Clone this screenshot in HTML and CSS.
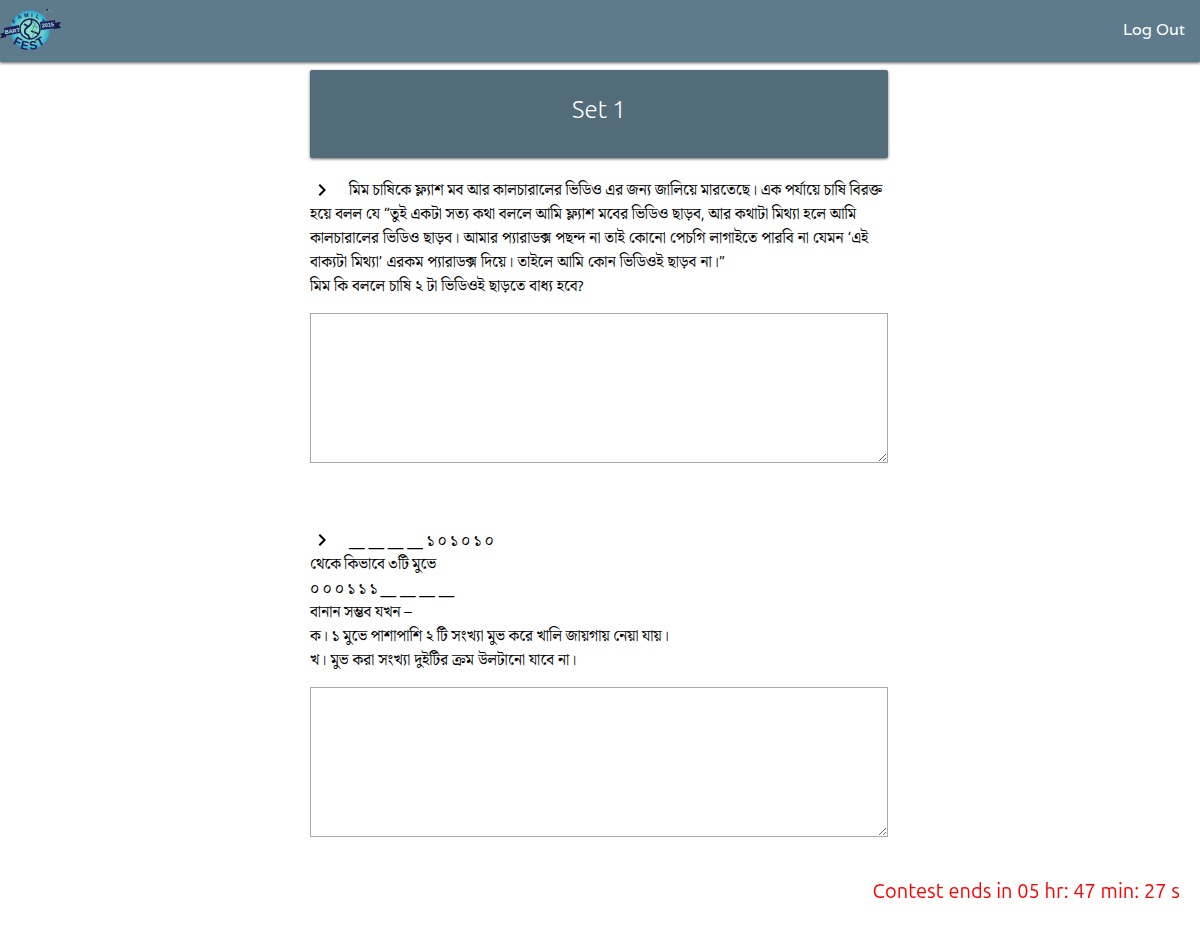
FILE: index.html
```html
<!DOCTYPE html>
<html lang="bn">
<head>
<meta charset="utf-8">
<title>Set 1</title>
<link rel="stylesheet" href="styles.css">
</head>
<body>
<nav class="navbar">
  <svg class="logo" width="62" height="44" viewBox="0 0 62 44">
    <defs><radialGradient id="glow"><stop offset=".6" stop-color="#74d2c5"/><stop offset=".85" stop-color="#48bed0"/><stop offset="1" stop-color="#2fa4d8"/></radialGradient></defs>
    <circle cx="30" cy="21" r="19.500" fill="url(#glow)"/>
    <g class="logo-top"><text x="14" y="15" transform="rotate(-38 14 15)">F</text><text x="18.500" y="10.500" transform="rotate(-24 18.500 10.500)">A</text><text x="24.500" y="8.500" transform="rotate(-10 24.500 8.500)">M</text><text x="31" y="8" transform="rotate(5 31 8)">I</text><text x="35.500" y="8.500" transform="rotate(22 35.500 8.500)">L</text><text x="40.500" y="12" transform="rotate(38 40.500 12)">Y</text></g>
    <path d="M0 25l6-2v5l-6 1.500 2-3zM61 13l-7 1v6l7-1-2-3z" fill="#17194d"/>
    <path d="M4 19l15-3 1 8-16 3zM40 13l15-2 1 8-15 2z" fill="#20205a"/>
    <circle cx="30" cy="20" r="10" fill="#8adfca" stroke="#20205a" stroke-width="1.400"/>
    <path d="M31 10q2 4-2 7t-4 4q-1 4 3 5l2 4M31 22l8 3M24 15l5 3" fill="none" stroke="#20205a" stroke-width="1.800"/>
    <path d="M33 12l4 8M36 13l-4 9M32 17l7 1M35 21l-3 8" fill="none" stroke="#48998f" stroke-width=".8"/>
    <text class="logo-ribbon" x="5" y="25" transform="rotate(-8 5 25)">BART</text>
    <text class="logo-ribbon" x="42" y="18.500" transform="rotate(-7 42 18.500)">2015</text>
    <g class="logo-bottom"><text x="12.500" y="34.500" transform="rotate(28 12.500 34.500)">F</text><text x="20" y="39.500" transform="rotate(12 20 39.500)">E</text><text x="30" y="41" transform="rotate(-9 30 41)">S</text><text x="39" y="38" transform="rotate(-30 39 38)">T</text></g>
    <path d="M43 7l4-6 6 1.500" fill="none" stroke="#7899a3" stroke-width=".8"/><path d="M46 0h2v1.500h-2z" fill="#20205a"/>
  </svg>
  <a class="logout">Log Out</a>
</nav>
<main class="container">
  <header class="card"><span class="card-title">Set 1</span></header>
  <section class="question">
    <p class="prompt"><svg class="chevron" viewBox="0 0 24 24"><path d="M10 6L8.590 7.410 13.170 12l-4.580 4.590L10 18l6-6z"/></svg><span class="l1">মিম চাষিকে ফ্ল্যাশ মব আর কালচারালের ভিডিও এর জন্য জালিয়ে মারতেছে। এক পর্যায়ে চাষি বিরক্ত</span><br>
    <span class="l2">হয়ে বলল যে “তুই একটা সত্য কথা বললে আমি ফ্ল্যাশ মবের ভিডিও ছাড়ব, আর কথাটা মিথ্যা হলে আমি</span><br>
    <span class="l3">কালচারালের ভিডিও ছাড়ব। আমার প্যারাডক্স পছন্দ না তাই কোনো পেচগি লাগাইতে পারবি না যেমন ‘এই</span><br>
    <span class="l4">বাক্যটা মিথ্যা’ এরকম প্যারাডক্স দিয়ে। তাইলে আমি কোন ভিডিওই ছাড়ব না।”</span><br>
    <span class="l5">মিম কি বললে চাষি ২ টা ভিডিওই ছাড়তে বাধ্য হবে?</span></p>
    <textarea class="answer"></textarea>
  </section>
  <section class="question">
    <p class="prompt"><svg class="chevron" viewBox="0 0 24 24"><path d="M10 6L8.590 7.410 13.170 12l-4.580 4.590L10 18l6-6z"/></svg><span class="l6"><b>__ __ __ __ </b>১ ০ ১ ০ ১ ০</span><br>
    <span class="l7">থেকে কিভাবে ৩টি মুভে</span><br>
    <span class="l8">০ ০ ০ ১ ১ ১ <b>__ __ __ __</b></span><br>
    <span class="l9">বানান সম্ভব যখন –</span><br>
    <span class="l10">ক। ১ মুভে পাশাপাশি ২ টি সংখ্যা মুভ করে খালি জায়গায় নেয়া যায়।</span><br>
    <span class="l11">খ। মুভ করা সংখ্যা দুইটির ক্রম উলটানো যাবে না।</span></p>
    <textarea class="answer"></textarea>
  </section>
</main>
<div class="timer">Contest ends in 05 hr: 47 min: 27 s</div>
</body>
</html>
```

FILE: styles.css
```css
* { box-sizing: border-box; }
body { margin: 0; height: 925px; overflow: hidden; background: #fff; color: #000; font-family: Ubuntu, "Noto Sans", sans-serif; }
.navbar { height: 62px; display: flex; justify-content: space-between; align-items: center; background: #5d7b8a; box-shadow: 0 1px 3px rgba(0,0,0,.65); padding-right: 15px; }
.logo { display: block; }
.logo text { font-family: "Liberation Sans", sans-serif; font-weight: bold; fill: #20205a; }
.logo .logo-top text { font-size: 5.500px; }
.logo .logo-ribbon { font-size: 5.500px; fill: #b6e5e1; }
.logo .logo-bottom text { font-size: 12px; }
.logout { color: #fff; font-family: Varela, "Varela Round", "Noto Sans", sans-serif; font-size: 16px; line-height: 24px; margin-top: -3px; }
.container { width: 578px; margin: 8px 0 0 310px; }
.card { height: 88px; display: flex; justify-content: center; padding-top: 21px; border-radius: 2px; background: #526d79; box-shadow: 0 1px 3px rgba(0,0,0,.6); margin-bottom: 20px; }
.card-title { color: #fff; font-size: 24px; font-weight: 300; line-height: 38px; }
.question { margin-bottom: 65px; }
.prompt { margin: 0 0 15px; font-size: 15.400px; line-height: 24px; white-space: nowrap; }
.prompt span { display: inline-block; height: 24px; vertical-align: top; font-family: Ubuntu, "Noto Serif Bengali", "Noto Sans", sans-serif; }
.prompt b { font-weight: 400; font-size: 16px; word-spacing: 0; }
.prompt .l2 { word-spacing: .25px; }
.prompt .l3, .prompt .l4 { word-spacing: .6px; }
.prompt .l5, .prompt .l11 { word-spacing: .45px; }
.prompt .l6, .prompt .l7, .prompt .l8 { word-spacing: -.5px; }
.chevron { width: 24px; height: 24px; margin-right: 15px; vertical-align: top; }
.answer { display: block; width: 578px; height: 150px; margin: 0; border: 1px solid #a9a9a9; border-radius: 0; background: #fff; resize: vertical; }
.timer { position: fixed; right: 20px; bottom: 20px; color: red; font-size: 20px; line-height: 28px; letter-spacing: .06px; white-space: nowrap; }
```
